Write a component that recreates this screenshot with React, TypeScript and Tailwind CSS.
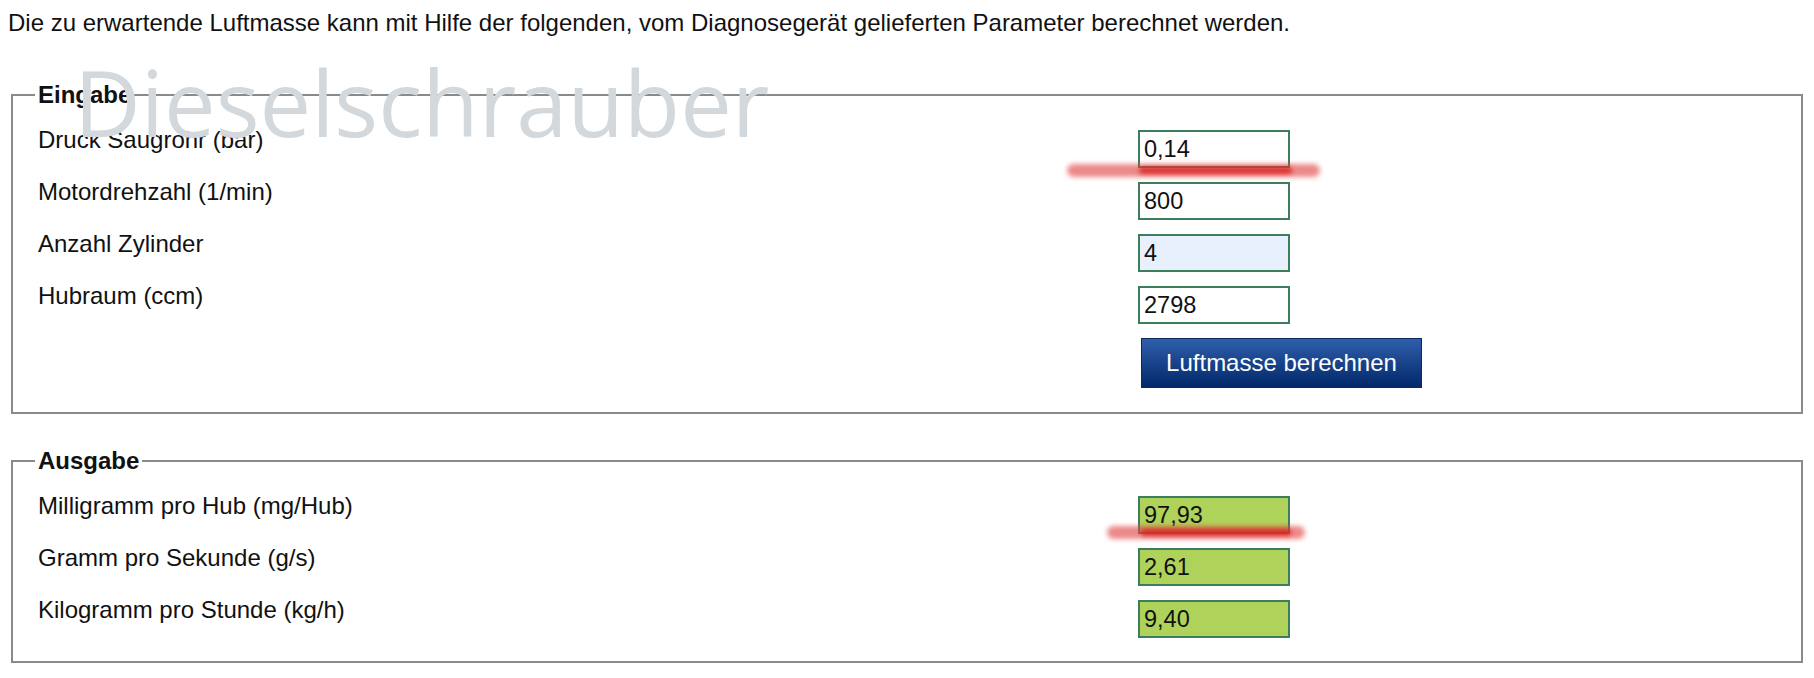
import React from "react";

type Row = { label: string; value: string; tone?: "plain" | "auto" | "result" };

const eingabe: Row[] = [
  { label: "Druck Saugrohr (bar)", value: "0,14" },
  { label: "Motordrehzahl (1/min)", value: "800" },
  { label: "Anzahl Zylinder", value: "4", tone: "auto" },
  { label: "Hubraum (ccm)", value: "2798" },
];

const ausgabe: Row[] = [
  { label: "Milligramm pro Hub (mg/Hub)", value: "97,93", tone: "result" },
  { label: "Gramm pro Sekunde (g/s)", value: "2,61", tone: "result" },
  { label: "Kilogramm pro Stunde (kg/h)", value: "9,40", tone: "result" },
];

const toneClass = {
  plain: "bg-white",
  auto: "bg-[#e8f0fe]",
  result: "bg-[#afd35a]",
};

const Field = ({ row }: { row: Row }) => (
  <div className="flex items-start">
    <div className="w-[1103px] pl-[3px] leading-[28px]">{row.label}</div>
    <input
      readOnly
      value={row.value}
      className={`mt-[4px] h-[38px] w-[152px] border-2 border-[#3b7d5c] px-[4px] text-[23.5px] text-[#111] outline-none ${toneClass[row.tone ?? "plain"]}`}
    />
  </div>
);

// red marker stroke drawn over a value
const Streak = ({ className, core }: { className: string; core: string }) => (
  <div className={`pointer-events-none absolute ${className}`}>
    <div className="absolute inset-0 rounded-full bg-[#e24a4a]/65 blur-[2.5px]" />
    <div className={`absolute inset-y-[3px] rounded-full bg-[#dc1e1e]/80 blur-[2px] ${core}`} />
  </div>
);

export default function App() {
  return (
    <div className="relative min-h-[678px] bg-white px-[11px] pt-[9px] text-[24px] text-[#111] font-['Liberation_Sans',Arial,sans-serif]">
      <p className="-ml-[3px] leading-[28px]">
        Die zu erwartende Luftmasse kann mit Hilfe der folgenden, vom Diagnosegerät gelieferten Parameter berechnet werden.
      </p>

      <fieldset className="mt-[44px] border-2 border-[#8a8a8a] pl-[22px] pt-[17px] pb-[24px]">
        <legend className="px-[3px] font-bold leading-[28px]">Eingabe</legend>
        <div className="flex flex-col gap-[10px]">
          {eingabe.map((r) => (
            <Field key={r.label} row={r} />
          ))}
        </div>
        <div className="mt-[14px] pl-[1106px]">
          <button className="h-[50px] w-[281px] border border-[#0a2a60] bg-linear-to-b from-[#2f5fab] to-[#03286a] text-[24px] text-white">
            Luftmasse berechnen
          </button>
        </div>
      </fieldset>

      <fieldset className="mt-[33px] border-2 border-[#8a8a8a] pl-[22px] pt-[17px] pb-[23px]">
        <legend className="px-[3px] font-bold leading-[28px]">Ausgabe</legend>
        <div className="flex flex-col gap-[10px]">
          {ausgabe.map((r) => (
            <Field key={r.label} row={r} />
          ))}
        </div>
      </fieldset>

      {/* watermark sits over the form */}
      <div className="pointer-events-none absolute left-[74px] top-[56px] text-[92px] leading-none font-normal text-[#d3d8dc] font-['Open_Sans',sans-serif]">
        Dieselschrauber
      </div>

      <Streak className="left-[1067px] top-[164px] h-[13px] w-[253px]" core="left-[72px] right-[28px]" />
      <Streak className="left-[1107px] top-[526px] h-[13px] w-[198px]" core="left-[34px] right-[14px]" />
    </div>
  );
}
